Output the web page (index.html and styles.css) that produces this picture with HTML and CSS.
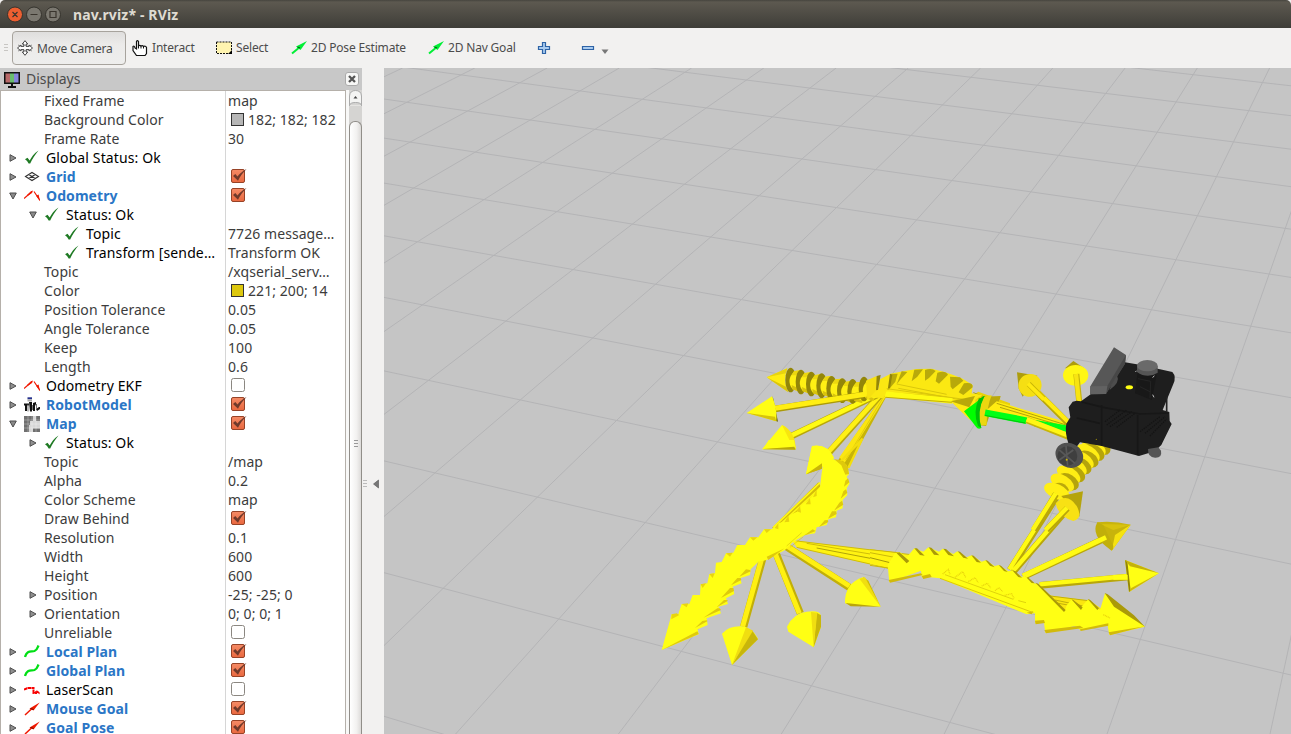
FILE: index.html
```html
<!DOCTYPE html>
<html lang="en">
<head>
<meta charset="utf-8">
<title>nav.rviz* - RViz</title>
<link rel="stylesheet" href="styles.css">
</head>
<body>
<svg class="defs" width="0" height="0">
  <defs>
    <linearGradient id="boxfill" x1="0" y1="0" x2="0" y2="1"><stop offset="0" stop-color="#f58b66"/><stop offset="1" stop-color="#e9683f"/></linearGradient>
    <symbol id="right" viewBox="0 0 8 8"><path d="M1 .7 7 4 1 7.3z" fill="#8f8f8f" stroke="#4d4d4d"/></symbol>
    <symbol id="down" viewBox="0 0 8 8"><path d="M.7 1H7.3L4 7z" fill="#8a8a8a" stroke="#4d4d4d"/></symbol>
    <symbol id="ok" viewBox="0 0 16 16"><path d="M1 9.300 3.500 7.800 5.700 10.500C7.500 7 10 3.500 14.500 .5 11 4.700 8.200 9 6.200 13.500H4.600Q3.300 10.500 1 9.300z" fill="#1f7a24"/></symbol>
    <symbol id="grid" viewBox="0 0 16 16"><path d="M1.500 7.500 8 3.500 14.500 7.500 8 11.500zM4.700 5.500l6.500 4M11.300 5.500 4.700 9.500" fill="none" stroke="#333" stroke-width="1.100"/></symbol>
    <symbol id="odom" viewBox="0 0 16 16"><path d="M0 10.500 8 3.500M10 3.500l6 9" fill="none" stroke="#f01800" stroke-width="1.200"/><path d="M3 7 7 3.300 9 2.500 8 5 4 7.800zM12 7.800l2.600-1.300L16 13z" fill="#f01800"/></symbol>
    <symbol id="robot" viewBox="0 0 16 16"><path d="M3.500 .3h4.500v2H3.500z" fill="#24308c"/><path d="M3.500 2.500h4.500V4.500h-4.500z" fill="#aaa"/><path d="M0 6.500h5v2H3v5.500H1V8.500H0zM5 5h3v9.500H6zM9 6l3-1v2l-1 2v5H9zM12 12l3-2h1v2l-3 2z" fill="#111"/><path d="M4 7.500v7M8.500 8v5M12.500 7v5" stroke="#777"/></symbol>
    <symbol id="map" viewBox="0 0 16 16"><path d="M0 0h16v16H0z" fill="#d6d6d6"/><path d="M0 0h9v5H6v4H5v7H0zM12 0h4v5h-4zM9 12.500h7V16H9z" fill="#707070"/><path d="M4 0v16M8 0v16M12 0v16M0 4h16M0 8h16M0 12h16" stroke="#fff" stroke-width=".3"/></symbol>
    <symbol id="plan" viewBox="0 0 16 16"><path d="M1 13C3 6 7 8 10.500 7 13 6 13.500 4 14.500 1.500" fill="none" stroke="#00df15" stroke-width="2.300"/></symbol>
    <symbol id="laser" viewBox="0 0 16 16"><path d="M0 7.500 4 6H9.500V11H12V9L16 11.500" fill="none" stroke="#f80000" stroke-width="2" stroke-dasharray="3.500 .4"/></symbol>
    <symbol id="goal" viewBox="0 0 16 16"><path d="M1 14 8 7.500" stroke="#f01800" stroke-width="1.500"/><path d="M5.500 7.500 15.700 1.500 9.500 9.500z" fill="#f01800"/><path d="M6.500 7.500 9.500 8.500" stroke="#700e00"/></symbol>
    <symbol id="pose" viewBox="0 0 16 16"><path d="M1 13.500 8 7.700" stroke="#00ef35" stroke-width="2"/><path d="M5 6.500 16 1 9.500 10z" fill="#00ef35"/><path d="M6.500 7 9 8" stroke="#075d17" stroke-width="1.300"/></symbol>
    <symbol id="on" viewBox="0 0 17 16"><rect x="1.500" y="1.500" width="13" height="13" rx="1.500" fill="url(#boxfill)" stroke="#974327"/><path d="M3 8 5.300 6 7.500 8.500C10 5.500 12.500 3 16.600 1 13 4.500 10.200 8 8 12.800z" fill="#703a2b"/></symbol>
    <symbol id="off" viewBox="0 0 17 16"><rect x="1.500" y="1.500" width="13" height="13" rx="2" fill="#fff" stroke="#8b8781"/></symbol>
    <g id="disc"><ellipse rx="16" ry="37" fill="#938609"/><path d="M12-27Q-16 0 6 28L29 36V-29z" fill="#fff014"/><path d="M3 15 5 28 29 36V28z" fill="#d9c30d"/><path d="M10-27 29-29V-14L3-14z" fill="#ecd710"/></g>
    <g id="stack"><ellipse cx="14" cy="-12" rx="34" ry="22" transform="rotate(32)" fill="#b5a40b"/><ellipse rx="39" ry="22" transform="rotate(32)" fill="#ffed14"/></g>
  </defs>
</svg>
<header class="titlebar">
  <svg class="winbtns" viewBox="0 0 64 28"><g stroke="#35332d"><circle cx="15" cy="14.500" r="7.500" fill="#ed5f31"/><circle cx="34" cy="14.500" r="7.500" fill="#7b7870"/><circle cx="53" cy="14.500" r="7.500" fill="#7b7870"/></g><g fill="none" stroke="#3a352e" stroke-width="1.200"><path d="M12.500 12l5 5M17.500 12l-5 5M30.500 14.500h7M50 11.500h6v6h-6z"/></g></svg>
  <span class="title">nav.rviz* - RViz</span>
</header>
<nav class="toolbar">
  <span class="grip"></span>
  <span class="tool active"><svg class="ic" viewBox="0 0 16 16"><path d="M8 .7 10.700 4H9.200V6.500H12V5L15.500 8 12 11V9.500H9.200V12h1.500L8 15.300 5.300 12H6.800V9.500H4V11L.5 8 4 5V6.500H6.800V4H5.300z" fill="#fff" stroke="#333" stroke-width=".9"/><path d="M1 5 5 6.500 8 5l3 1.500L15 5M1 11 5 9.500 8 11l3-1.500L15 11" fill="none" stroke="#666" stroke-width=".7"/></svg>Move Camera</span>
  <span class="tool interact"><svg class="ic" viewBox="0 0 16 16"><path d="M4.500 9V1.500Q5.300-.2 6.500 1.500V6Q7.500 4.700 9 6 10.500 5 11.500 6.500 13.500 5.500 14.500 7.500V13.500L13 15.500H4.500L1 10.500V6.500Q2.500 5.500 3 8z" fill="#fff" stroke="#111" stroke-width="1.200"/><path d="M6.500 6v2.500M9 6v2.500M11.500 6.500v2" stroke="#111"/></svg><span>Interact</span></span>
  <span class="tool select"><svg class="ic" viewBox="0 0 16 16"><path d="M.5 2h15v11.500H.5z" fill="#fff4b0" stroke="#111" stroke-dasharray="2 1"/><path d="M12 14h4v-4z" fill="#000"/></svg><span>Select</span></span>
  <span class="tool estimate"><svg class="ic"><use href="#pose"/></svg><span>2D Pose Estimate</span></span>
  <span class="tool navgoal"><svg class="ic"><use href="#pose"/></svg><span>2D Nav Goal</span></span>
  <svg class="plus" viewBox="0 0 14 14"><path d="M5.500 1.500h3v4h4v3h-4v4h-3v-4h-4v-3h4z" fill="#a9cbef" stroke="#2e63a6" stroke-width="1.200"/></svg>
  <svg class="minus" viewBox="0 0 28 14"><path d="M1.500 5.500h11v3h-11z" fill="#a9cbef" stroke="#2e63a6" stroke-width="1.200"/><path d="M20.500 8.500h7l-3.500 4.500z" fill="#777"/></svg>
</nav>
<div class="main">
  <section class="dock">
    <header class="dockhead">
      <svg class="monitor" viewBox="0 0 16 16"><path d="M0 0h16v12H0zM7 12h2v2h3v2H4v-2h3z" fill="#111"/><path d="M1.500 1.500h4.500v9H1.500z" fill="#b76868"/><path d="M6 1.500h4v9H6z" fill="#69bd6e"/><path d="M10 1.500h4.500v9H10z" fill="#8585dc"/></svg>
      <span>Displays</span>
      <svg class="close" viewBox="0 0 14 14"><rect x=".5" y=".5" width="13" height="13" rx="2.500" fill="#f7f7f6" stroke="#aaa"/><path d="M4 4l6 6M10 4l-6 6" stroke="#555" stroke-width="2.300"/></svg>
    </header>
    <div class="body">
      <div class="tree">
        <div class="row"><div class="name d1">Fixed Frame</div><div class="val">map</div></div>
        <div class="row"><div class="name d1">Background Color</div><div class="val"><i class="swatch gray"></i>182; 182; 182</div></div>
        <div class="row"><div class="name d1">Frame Rate</div><div class="val">30</div></div>
        <div class="row"><div class="name d0 st"><svg class="arr"><use href="#right"/></svg><svg class="ri"><use href="#ok"/></svg>Global Status: Ok</div><div class="val"></div></div>
        <div class="row"><div class="name d0 en"><svg class="arr"><use href="#right"/></svg><svg class="ri"><use href="#grid"/></svg>Grid</div><div class="val"><svg class="chk"><use href="#on"/></svg></div></div>
        <div class="row"><div class="name d0 en"><svg class="arr"><use href="#down"/></svg><svg class="ri"><use href="#odom"/></svg>Odometry</div><div class="val"><svg class="chk"><use href="#on"/></svg></div></div>
        <div class="row"><div class="name d1 st"><svg class="arr"><use href="#down"/></svg><svg class="ri"><use href="#ok"/></svg>Status: Ok</div><div class="val"></div></div>
        <div class="row"><div class="name d2 st"><svg class="ri"><use href="#ok"/></svg>Topic</div><div class="val">7726 message…</div></div>
        <div class="row"><div class="name d2 st"><svg class="ri"><use href="#ok"/></svg>Transform [sende…</div><div class="val">Transform OK</div></div>
        <div class="row"><div class="name d1">Topic</div><div class="val">/xqserial_serv…</div></div>
        <div class="row"><div class="name d1">Color</div><div class="val"><i class="swatch yellow"></i>221; 200; 14</div></div>
        <div class="row"><div class="name d1">Position Tolerance</div><div class="val">0.05</div></div>
        <div class="row"><div class="name d1">Angle Tolerance</div><div class="val">0.05</div></div>
        <div class="row"><div class="name d1">Keep</div><div class="val">100</div></div>
        <div class="row"><div class="name d1">Length</div><div class="val">0.6</div></div>
        <div class="row"><div class="name d0 st"><svg class="arr"><use href="#right"/></svg><svg class="ri"><use href="#odom"/></svg>Odometry EKF</div><div class="val"><svg class="chk"><use href="#off"/></svg></div></div>
        <div class="row"><div class="name d0 en"><svg class="arr"><use href="#right"/></svg><svg class="ri"><use href="#robot"/></svg>RobotModel</div><div class="val"><svg class="chk"><use href="#on"/></svg></div></div>
        <div class="row"><div class="name d0 en"><svg class="arr"><use href="#down"/></svg><svg class="ri"><use href="#map"/></svg>Map</div><div class="val"><svg class="chk"><use href="#on"/></svg></div></div>
        <div class="row"><div class="name d1 st"><svg class="arr"><use href="#right"/></svg><svg class="ri"><use href="#ok"/></svg>Status: Ok</div><div class="val"></div></div>
        <div class="row"><div class="name d1">Topic</div><div class="val">/map</div></div>
        <div class="row"><div class="name d1">Alpha</div><div class="val">0.2</div></div>
        <div class="row"><div class="name d1">Color Scheme</div><div class="val">map</div></div>
        <div class="row"><div class="name d1">Draw Behind</div><div class="val"><svg class="chk"><use href="#on"/></svg></div></div>
        <div class="row"><div class="name d1">Resolution</div><div class="val">0.1</div></div>
        <div class="row"><div class="name d1">Width</div><div class="val">600</div></div>
        <div class="row"><div class="name d1">Height</div><div class="val">600</div></div>
        <div class="row"><div class="name d1x"><svg class="arr"><use href="#right"/></svg>Position</div><div class="val">-25; -25; 0</div></div>
        <div class="row"><div class="name d1x"><svg class="arr"><use href="#right"/></svg>Orientation</div><div class="val">0; 0; 0; 1</div></div>
        <div class="row"><div class="name d1">Unreliable</div><div class="val"><svg class="chk"><use href="#off"/></svg></div></div>
        <div class="row"><div class="name d0 en"><svg class="arr"><use href="#right"/></svg><svg class="ri"><use href="#plan"/></svg>Local Plan</div><div class="val"><svg class="chk"><use href="#on"/></svg></div></div>
        <div class="row"><div class="name d0 en"><svg class="arr"><use href="#right"/></svg><svg class="ri"><use href="#plan"/></svg>Global Plan</div><div class="val"><svg class="chk"><use href="#on"/></svg></div></div>
        <div class="row"><div class="name d0 st"><svg class="arr"><use href="#right"/></svg><svg class="ri"><use href="#laser"/></svg>LaserScan</div><div class="val"><svg class="chk"><use href="#off"/></svg></div></div>
        <div class="row"><div class="name d0 en"><svg class="arr"><use href="#right"/></svg><svg class="ri"><use href="#goal"/></svg>Mouse Goal</div><div class="val"><svg class="chk"><use href="#on"/></svg></div></div>
        <div class="row"><div class="name d0 en"><svg class="arr"><use href="#right"/></svg><svg class="ri"><use href="#goal"/></svg>Goal Pose</div><div class="val"><svg class="chk"><use href="#on"/></svg></div></div>
      </div>
      <div class="scroll"><svg viewBox="0 0 13 16"><path d="M.5 16V6Q1 .5 6.500 .5T12.500 6V16" fill="#f4f4f3" stroke="#aaa"/><path d="M.5 15.500Q1 12.500 6.500 12.500T12.500 15.500" fill="#d5d4d2" stroke="#aaa"/><path d="M4.500 8.500h4L6.500 6z" fill="#444"/></svg><div class="thumb"><i></i><i></i><i></i></div></div>
    </div>
  </section>
  <div class="splitter"><svg viewBox="0 0 22 12"><path d="M1 2.500h4M1 5.500h4M1 8.500h4" stroke="#bbb"/><path d="M16.500 2v8L11.500 6z" fill="#777" stroke="#555" stroke-width=".6"/></svg></div>
  <svg class="scene" viewBox="384 68 907 666">
    <rect x="384" y="68" width="907" height="666" fill="#c5c5c5"/>
    <g stroke="#b4b4b6" stroke-width="1">
      <path d="M384 716.300 1291 989.500M384 572.700 1291 812.700M384 460.900 1291 675M384 370.900 1291 564.100M384 297.400 1291 473.600M384 235.800 1291 397.700M384 183.100 1291 332.800M384 138.100 1291 277.400M384 99 1291 229.200M384 64.500 1291 186.700M384 34 1291 149.200M384 6.800 1291 115.700M384-17.400 1291 85.800"/>
      <path d="M402.600 68-1010.300 734M474.800 68-847.400 734M547.100 68-684.500 734M619.300 68-521.700 734M691.600 68-358.800 734M763.800 68-195.900 734M836.100 68-33.100 734M908.300 68 129.800 734M980.600 68 292.700 734M1052.800 68 455.600 734M1125.100 68 618.400 734M1197.300 68 781.300 734M1269.600 68 944.200 734M1341.800 68 1107 734M1414 68 1270 734"/>
    </g>
    <!-- upper left trail -->
    <g transform="translate(730 340) scale(.33333)">
      <path d="M745 155 840 190V225L700 185z" fill="#ead207"/><path d="M730 158 840 200M740 172 840 208" stroke="#a89905" stroke-width="3"/>
      <path d="M462 160 325 360 352 385 470 168z" fill="#c7b408"/><path d="M460 165 328 352 344 368 466 172z" fill="#fbe611"/><path d="M460 172 347 360" stroke="#d3bf09" stroke-width="2"/>
      <path d="M460 155 295 340" stroke="#b9a709" stroke-width="20"/><path d="M460 154 294 337" stroke="#fff114" stroke-width="14"/>
      <path d="M460 156 185 288" stroke="#b9a709" stroke-width="20"/><path d="M460 155 185 286" stroke="#fffb14" stroke-width="14"/>
      <path d="M110 112 172 85Q158 120 174 156z" fill="#ffed13"/><path d="M110 112 172 85 168 100z" fill="#e8d30f"/><path d="M110 112 174 156 168 140z" fill="#dac40d"/>
      <use href="#disc" x="182" y="120"/><use href="#disc" x="213" y="126"/><use href="#disc" x="244" y="132"/><use href="#disc" x="275" y="137"/><use href="#disc" x="305" y="145"/><use href="#disc" x="337" y="152"/><use href="#disc" x="368" y="154"/><use href="#disc" x="402" y="147"/>
      <path d="M408 122 440 108 446 155 412 180z" fill="#f6e011"/>
      <path d="M443 158 450 118 482 101 520 94 560 87 605 86 640 95 670 105 698 116 728 135 725 160 758 165 720 190 665 186 468 172z" fill="#fbe812"/>
      <g fill="#b8a90b"><path d="M480 102 503 101 496 125 480 144zM515 94 532 96 512 118 500 133zM553 89 579 88 562 110 545 124zM585 90Q605 82 617 93L597 114 585 122zM622 98Q647 90 654 104L627 131 617 124zM660 110 690 112 700 122 668 148 662 140zM702 130Q730 126 728 142L700 165 686 157z"/></g>
      <g fill="#938609"><path d="M480 101 487 105 480 145 473 150zM440 108 452 105 444 150 438 152z"/></g>
      <g fill="none" stroke="#dac70b" stroke-width="3"><path d="M470 146 710 179M500 132 650 163M505 145 690 179M468 157 650 171"/></g>
      <path d="M466 162 667 183" stroke="#fffb14" stroke-width="17"/><path d="M468 172 667 187" stroke="#c3ae07" stroke-width="3"/>
      <path d="M135 207 400 165" stroke="#ab9a07" stroke-width="20"/><path d="M135 205 410 162" stroke="#ffee12" stroke-width="15"/>
      <path d="M440 150 470 152 460 175 420 172z" fill="#fbe812"/>
      <path d="M128 168 144 245 128 239z" fill="#62590a"/><path d="M50 219 126 169Q142 205 139 244z" fill="#fffd14"/><path d="M50 219 139 244 135 230z" fill="#d7c30a"/>
      <path d="M96 328 156 255Q190 270 197 328z" fill="#ffff14"/><path d="M156 255Q197 275 197 328L186 316z" fill="#f8e60f"/><path d="M96 328 190 319 197 328z" fill="#b9a709"/>
      <path d="M228 403 246 319Q293 310 312 355L275 380z" fill="#ffff14"/><path d="M228 403 275 368V386z" fill="#c9b508"/>
      <path d="M662 184 735 168 740 232 720 240z" fill="#ffea11"/><path d="M662 184 735 168 718 202z" fill="#b8a80a"/>
      <path d="M760 170 812 168Q810 187 785 206L768 258 745 255z" fill="#baa90b"/><path d="M740 185Q768 165 785 166 770 200 770 256L742 256z" fill="#ecd710"/>
      <path d="M702 214 764 167Q738 210 754 264 744 270 738 260z" fill="#0f0"/><path d="M764 167Q739 214 754 264L744 258Q728 215 746 177z" fill="#00bf08"/>
    </g>
    <!-- left trail -->
    <g transform="translate(650 440) scale(.33333)">
      <path d="M570 66 638-4M595 84 635 0" stroke="#f3de0e" stroke-width="7"/>
      <path d="M365 265 505 127 520 150 400 255z" fill="#d3bd0a"/><path d="M370 262 510 128M385 258 515 140" stroke="#fff714" stroke-width="5"/>
      <path d="M425 300 725 338 800 346 718 386 440 322z" fill="#fff312"/><path d="M440 303 800 346M470 310 720 352M440 322 718 385" stroke="#cfbc0a" stroke-width="3"/><path d="M500 324 718 366" stroke="#877a05" stroke-width="2"/>
      <g fill="none" stroke="#c2af08" stroke-width="22"><path d="M342 342 281 560M375 332 451 520M400 314 598 442"/></g>
      <g fill="none" stroke="#fff012" stroke-width="15"><path d="M339 342 278 560M372 332 448 520M400 311 598 438"/></g>
      <path d="M35 630 65 523 85 522 95 492 118 492 128 465 150 465 152 433 172 430 178 402 195 400 198 368 215 366 228 340 250 338 262 315 285 315 300 292 325 292 342 268 365 268 385 250 400 245 420 225 440 215 455 195 475 180 490 165 510 140 515 100 520 70 548 57 590 75 597 102 590 110 599 130 590 145 592 165 578 180 578 205 560 212 558 232 535 238 530 255 500 262 495 280 465 285 430 305 405 330 350 360 325 365 302 388 300 405 270 415 275 430 248 440 253 462 228 475 234 492 205 500 213 520 170 535 173 555 143 568 146 583z" fill="#ffff14"/>
      <g fill="#dfca0c"><path d="M552 57Q585 60 594 82L597 102 586 104 574 76zM598 127 582 140 586 122 594 115zM592 158 572 176 580 154 588 148zM580 194 552 212 568 188 576 182zM560 222 534 236 546 214 558 214zM535 246 507 261 524 241 533 240zM497 273 460 288 488 268zM350 350 404 325 355 360zM302 394 268 410 288 388 300 390zM274 420 243 436 262 414 272 414zM252 453 213 474 240 444 250 444zM234 482 200 502 222 480 231 480zM213 510 160 533 202 505 209 505zM173 543 135 564 157 543 170 541zM146 582 35 630 142 574z"/></g>
      <g fill="#e8d40e"><path d="M65 523 80 520 88 525 64 538zM95 492 115 490 110 502zM152 433 168 430 158 444zM178 402 194 400 188 414zM228 340 248 338 240 350zM300 292 322 292 310 302zM342 268 363 268 350 279zM385 250V268L374 264zM415 227 418 245 403 247zM450 198 453 218 440 214zM480 175 482 193 467 193zM500 148 500 168 489 172z"/></g>
      <path d="M410 318 455 278M420 322 460 290" stroke="#dcc80a" stroke-width="2"/>
      <path d="M468 103 486 18Q530 10 552 53L516 82z" fill="#ffff14"/><path d="M468 103 516 70 516 86z" fill="#c9b508"/><path d="M340 27 356 0H432L437 25z" fill="#ffff14"/><path d="M340 27 433 20 437 29z" fill="#b9a709"/>
      <path d="M216 581Q235 559 270 559T324 596L246 675z" fill="#ffff14"/><path d="M305 569 324 598 246 675z" fill="#c8b60b"/><path d="M288 562 309 572 246 675z" fill="#f0de11"/>
      <path d="M411 560Q430 520 470 515T512 526L513 560 491 622 415 575z" fill="#ffff14"/><path d="M500 518 513 526 513 560 491 622z" fill="#c8b60b"/><path d="M483 516 502 518 491 622z" fill="#f0de11"/>
      <path d="M585 490Q583 430 640 411L655 424 692 500 600 495z" fill="#ffff14"/><path d="M639 411 655 422 692 500z" fill="#c8b60b"/><path d="M628 416 645 412 692 500z" fill="#f0de11"/><path d="M587 489 692 500 602 499z" fill="#baa609"/>
    </g>
    <!-- lower right trail -->
    <g transform="translate(870 500) scale(.33333)">
      <g stroke="#b9a709" stroke-width="20"><path d="M420 210 560-10M430 215 590 30M460 230 712 112M510 256 775 231"/></g>
      <g stroke="#fffb14" stroke-width="13"><path d="M418 208 556-10M430 212 588 28M458 227 710 110M508 253 775 228"/></g>
      <path d="M0 148 90 160 60 203 0 192z" fill="#fff312"/><path d="M0 149 85 158M0 158 90 175M0 196 60 205" stroke="#cbb809" stroke-width="3"/><path d="M0 173 60 188" stroke="#756a05" stroke-width="2"/>
      <path d="M530 285 660 302 700 330 560 330z" fill="#fbe610"/><path d="M540 288 655 302M555 300 640 318M555 308 620 320" stroke="#c2b00a" stroke-width="3"/>
      <path d="M53 195 75 160 90 157 110 172 133 145 160 155 175 142 207 155 218 146 250 162 262 154 290 172 305 166 335 185 347 181 374 198 387 195 415 214 428 211 455 230 468 230 493 250 504 252 585 330 590 316 605 298 630 325 655 298 690 330 705 280 825 380 718 405 712 372 632 391 615 378 526 398 522 368 495 370 495 340 470 343 210 235 180 232 155 232 153 212 58 247z" fill="#ffff14"/>
      <g fill="#aa9a08"><path d="M80 160 88 157 118 183 110 190zM133 145 141 145 164 167 150 165zM176 142 184 143 208 166 192 164zM220 146 228 147 252 169 235 165zM263 154 270 155 294 176 280 173zM304 166 311 167 333 188 320 186zM346 180 353 182 374 202 360 197zM386 195 393 197 413 216 402 213zM427 211 436 214 456 233 445 231zM466 229 473 231 494 250 485 249zM496 248 505 251 587 330 582 336zM604 298 610 300 638 322 633 330zM653 297 660 299 687 325 682 330zM704 279 713 283 792 346 825 380 732 320z"/></g>
      <g fill="#d2ba0a"><path d="M56 240 153 220 158 225 60 248zM155 228 180 222 185 231 160 237zM495 362 522 360 525 369 497 373zM523 390 630 377 640 384 528 400zM630 388 715 370V377L632 393zM716 397 825 379 720 406zM470 338 490 334 485 343z"/></g>
      <path d="M210 235 490 338" stroke="#dcc70a" stroke-width="3"/><path d="M225 224 430 298M445 302 468 308" stroke="#cfbc08" stroke-width="2"/>
      <path d="M218 222 235 208 240 223M255 232 278 215 288 234M295 245 315 233 325 248M335 258 352 250 362 264M375 272 387 263 398 275M404 286 425 281 432 295M700 344 720 354" fill="none" stroke="#e8d40c" stroke-width="4" stroke-dasharray="3 2"/>
      <path d="M682 67Q730 62 782 74L725 152 690 110z" fill="#c8b40c"/><path d="M690 72 782 74 730 90z" fill="#d8c20d"/><path d="M782 74 725 153 735 105z" fill="#f6e310"/><path d="M682 67Q660 107 722 150 730 153 730 138L700 75z" fill="#c1af0b"/><path d="M465 228 708 112" stroke="#fffb14" stroke-width="14"/>
      <path d="M765 180 867 220 777 276z" fill="#ffff14"/><path d="M765 180 772 184 782 272 777 276z" fill="#93850a"/><path d="M765 180 867 220 780 199z" fill="#c4b10b"/><path d="M867 220 777 276 784 264z" fill="#ceb90b"/><path d="M730 232H773" stroke="#ffff14" stroke-width="15"/>
    </g>
    <!-- robot and surrounding arrows -->
    <g transform="translate(960 330) scale(.33333)">
      <path d="M110 214 330 280V322L80 240z" fill="#ffec12"/><path d="M110 220 325 287M120 232 320 292" stroke="#b4a208" stroke-width="3"/><path d="M75 248 200 272M225 280 330 298" stroke="#00ff18" stroke-width="20"/><path d="M75 256 195 279" stroke="#00c70b" stroke-width="3"/>
      <path d="M200 270 330 322" stroke="#c8b508" stroke-width="19"/><path d="M200 268 330 318" stroke="#fff714" stroke-width="14"/>
      <path d="M208 163 325 280" stroke="#b9a709" stroke-width="19"/><path d="M208 161 325 276" stroke="#ffec12" stroke-width="13"/>
      <path d="M171 127 232 137 188 200 176 175z" fill="#ad9d0c"/><ellipse cx="210" cy="166" rx="35" ry="34" transform="rotate(-30 210 166)" fill="#f5df13"/><path d="M206 162 250 206" stroke="#c7b307" stroke-width="16"/><path d="M204 161 252 208" stroke="#ffea12" stroke-width="12"/>
      <path d="M340 93 372 114 315 115z" fill="#ad9d0c"/><ellipse cx="347" cy="136" rx="38" ry="31" fill="#fff714"/><path d="M349 132 358 218" stroke="#c6b20c" stroke-width="18"/><path d="M348 132 357 218" stroke="#f8e412" stroke-width="13"/>
      <use href="#stack" x="402" y="352"/><use href="#stack" x="384" y="370"/><use href="#stack" x="366" y="390"/><use href="#stack" x="345" y="410"/><use href="#stack" x="326" y="434"/>
      <path d="M300 434Q330 425 352 463L325 468z" fill="#bba90b"/><use href="#stack" x="307" y="458"/><path d="M282 462Q312 450 327 480L310 500z" fill="#bba90b"/><ellipse cx="290" cy="484" rx="40" ry="22" transform="rotate(24 290 484)" fill="#ffef15"/>
      <path d="M369 484 358 560 304 498z" fill="#b5a40c"/><path d="M287 520Q320 485 350 528 370 565 340 573 295 560 287 520z" fill="#f8e114"/>
      <g fill="none"><path d="M288 492 222 600M322 535 260 600" stroke="#b9a709" stroke-width="19"/><path d="M287 490 218 600M321 533 256 600" stroke="#fff714" stroke-width="13"/></g>
      <path d="M495 97 530 103 600 118 637 126Q650 140 640 162L608 240 628 246 629 273 635 282 604 345 584 364 537 378 425 348 360 337 350 350 325 340Q314 305 319 281L331 262 326 232 338 215 350 212 363 214 390 194z" fill="#1e1e1e"/>
      <path d="M425 225V347M533 255V376M350 264 420 280M365 216 430 232 540 252 626 249" fill="none" stroke="#171717" stroke-width="5"/>
      <path d="M435 275 480 240M440 285 500 240M450 290 515 245M470 292 525 250M540 305 600 260M555 310 615 260M570 318 620 267" stroke="#141414" stroke-width="4" stroke-dasharray="4 3"/>
      <path d="M620 200V245" stroke="#222" stroke-width="5"/>
      <path d="M462 52 498 75 495 101 443 183 438 192 390 193 391 169z" fill="#575757"/><path d="M498 75 495 101 438 192 442 168z" fill="#474747"/><path d="M391 169 442 168 438 192 390 193z" fill="#626262"/><path d="M471 136Q482 157 448 181L454 164z" fill="#4d4d4d"/>
      <path d="M533 125 525 190 575 210 590 135z" fill="#181818"/><path d="M534 146 572 154 570 205M540 170 570 185" fill="none" stroke="#242424" stroke-width="3"/><path d="M578 143 583 137M526 126 530 122M578 194 582 202" stroke="#bbb" stroke-width="3"/>
      <path d="M531 108V126Q562 148 593 128V108z" fill="#555"/><ellipse cx="562" cy="107" rx="31" ry="17" fill="#6a6a6a"/>
      <ellipse cx="508" cy="172" rx="11" ry="6" fill="#ffff12"/><circle cx="409" cy="328" r="2" fill="#9b8b0a"/>
      <path d="M564 357Q563 382 585 383T603 362L595 352z" fill="#555"/>
      <ellipse cx="328" cy="376" rx="43" ry="36" transform="rotate(28 328 376)" fill="#505050"/><ellipse cx="322" cy="378" rx="30" ry="29" fill="#3f3f3f"/><path d="M298 360 345 400M318 348 323 407M298 390 340 360" stroke="#585858" stroke-width="5"/><circle cx="320" cy="389" r="3" fill="#c9b50b"/>
    </g>
  </svg>
</div>
</body>
</html>
```
FILE: styles.css
```css
* { box-sizing: border-box; }
body { margin: 0; width: 1291px; height: 734px; overflow: hidden; display: flex; flex-direction: column; background: #f2f1f0; color: #4c4c4c; font-family: "Noto Sans", "Open Sans", sans-serif; }
svg { flex: none; display: block; }
.defs { height: 0; }
.titlebar { height: 28px; flex: none; display: flex; align-items: center; background: linear-gradient(#46443e 0, #5d5950 2px, #3e3d38 100%); border-radius: 5px 5px 0 0; color: #dfdbd2; }
.winbtns { width: 64px; height: 28px; }
.title { margin-left: 9px; font-size: 14px; font-weight: bold; line-height: 28px; white-space: nowrap; padding-top: 2px; letter-spacing: .15px; }
.toolbar { height: 40px; flex: none; display: flex; align-items: center; font-size: 12px; letter-spacing: -.18px; padding-left: 4px; }
.grip { width: 4px; height: 9px; background: repeating-linear-gradient(#c8c6c3 0 1px, transparent 1px 3px); margin-right: 4px; }
.tool { display: flex; align-items: center; white-space: nowrap; }
.tool span { padding-bottom: 2px; }
.ic { width: 16px; height: 16px; margin-right: 4px; }
.active { width: 114px; height: 34px; border: 1px solid #a7a39d; border-radius: 4px; background: linear-gradient(#dfdedd, #ecebea 40%, #eeeeed); padding-left: 4px; }
.interact { margin-left: 6px; width: 84px; }
.select { width: 75px; }
.estimate { width: 137px; }
.navgoal { width: 109px; }
.plus { width: 14px; height: 14px; }
.minus { width: 28px; height: 14px; margin-left: 30px; }
.main { flex: 1; display: flex; min-height: 0; }
.dock { width: 362px; display: flex; flex-direction: column; min-height: 0; }
.dockhead { height: 22px; flex: none; background: #c8c8c8; display: flex; align-items: center; padding: 0 3px 0 4px; font-size: 14px; }
.dockhead span { flex: 1; padding-bottom: 1px; }
.monitor { width: 16px; height: 16px; margin: 2px 6px 0 0; }
.close { width: 14px; height: 14px; }
.body { flex: 1; display: flex; min-height: 0; background: #f8f8f7; }
.tree { width: 346px; overflow: hidden; background: #fff; border: solid #b5b0aa; border-width: 1px 1px 0 1px; }
.row { height: 19px; display: flex; font-size: 14px; line-height: 19px; letter-spacing: .07px; color: #3c3c3c; white-space: nowrap; }
.name { width: 225px; border-right: 1px solid #d6d6d6; display: flex; align-items: center; flex: none; }
.val { padding-left: 2px; display: flex; align-items: center; }
.d0 { padding-left: 8px; }
.d1 { padding-left: 43px; }
.d1.st, .d1x { padding-left: 28px; }
.d2 { padding-left: 63px; }
.st { color: #000; letter-spacing: .12px; }
.en { color: #2a76c6; font-weight: bold; }
.arr { width: 8px; height: 8px; margin-right: 7px; }
.ri { width: 16px; height: 16px; margin-right: 6px; }
.chk { width: 17px; height: 16px; margin: 0 0 2px 2px; }
.swatch { width: 13px; height: 13px; border: 1px solid #333; margin: 0 4px 0 3px; }
.gray { background: #b6b6b6; }
.yellow { background: #ddc80e; }
.scroll { margin-left: 3px; width: 13px; display: flex; flex-direction: column; background: #d5d4d2; }
.scroll svg { width: 13px; height: 16px; }
.thumb { margin-top: 15px; flex: 1; border: 1px solid #918e89; border-bottom: 0; border-radius: 6px 6px 0 0; background: linear-gradient(90deg, #fff, #f2f1f0 60%, #dddbd9); display: flex; flex-direction: column; align-items: center; gap: 2px; padding-top: 318px; }
.thumb i { width: 4px; height: 1px; background: #999; }
.splitter { width: 22px; display: flex; align-items: center; padding-top: 166px; }
.splitter svg { width: 22px; height: 12px; }
.scene { width: 907px; height: 666px; }
```
